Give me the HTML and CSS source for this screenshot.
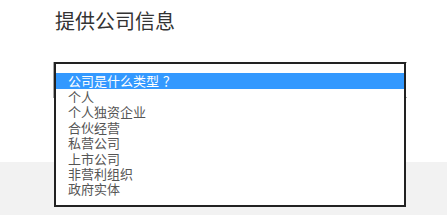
FILE: index.html
```html
<!DOCTYPE html>
<html lang="zh">
<head>
<meta charset="utf-8">
<link rel="stylesheet" href="styles.css">
</head>
<body>
<section class="top">
  <h1 class="title">提供公司信息</h1>
  <div class="field">
    <div class="select"></div>
    <ul class="dropdown">
      <li class="opt active">公司是什么类型<span class="punct">？</span></li>
      <li class="opt">个人</li>
      <li class="opt">个人独资企业</li>
      <li class="opt">合伙经营</li>
      <li class="opt">私营公司</li>
      <li class="opt">上市公司</li>
      <li class="opt">非营利组织</li>
      <li class="opt">政府实体</li>
    </ul>
  </div>
</section>
<section class="band"></section>
</body>
</html>
```

FILE: styles.css
```css
html, body {
  margin: 0;
  padding: 0;
  background: #ffffff;
  font-family: "Noto Sans CJK SC", "Noto Sans", sans-serif;
}
.top {
  height: 162px;
  padding-left: 53px;
  box-sizing: border-box;
  display: flex;
  flex-direction: column;
}
.title {
  margin: 7px 0 0 2px;
  font-size: 20px;
  line-height: 28px;
  font-weight: normal;
  color: #333333;
}
.field {
  position: relative;
  margin-top: 27px;
  width: 354px;
}
.select {
  height: 36px;
  border: 1px solid #a9a9a9;
  border-right: none;
  box-sizing: border-box;
  background: #fff;
}
.dropdown {
  position: absolute;
  top: 0;
  left: 1px;
  width: 352px;
  height: 145px;
  box-sizing: border-box;
  margin: 0;
  padding: 9px 0 0 0;
  list-style: none;
  border: 2px solid #222222;
  background: #ffffff;
  z-index: 2;
}
.opt {
  font-size: 13px;
  line-height: 15.4px;
  height: 15.4px;
  padding-left: 12px;
  color: #555555;
  white-space: nowrap;
}
.opt.active {
  height: 16px;
  line-height: 16px;
  background: #3399ff;
  color: #ffffff;
}
.punct {
  margin-left: 4px;
}
.band {
  height: 53px;
  background: #f2f2f2;
}
```
